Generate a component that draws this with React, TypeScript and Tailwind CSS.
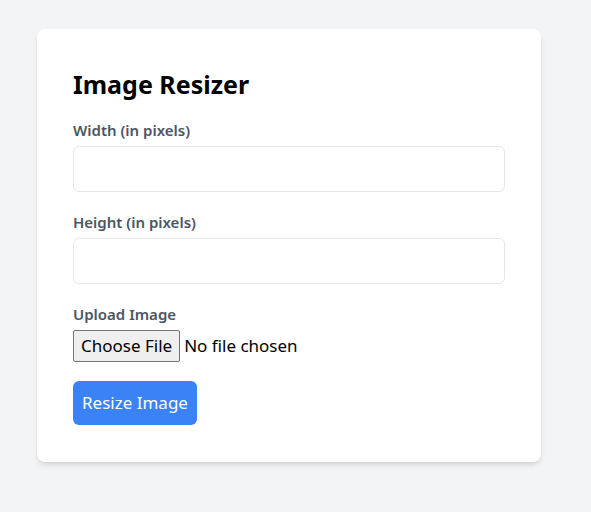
import React from "react";

export default function App() {
  return (
    <div className="min-h-screen bg-[#f3f4f6] pt-[29px] pl-[37px]" style={{ fontFamily: '"Noto Sans", "Open Sans", sans-serif' }}>
      <div className="w-[504px] bg-white rounded-lg shadow-md px-[36px] pt-[39px] pb-[37px]">
        <h1 className="text-[25px] leading-[32px] font-bold text-black mb-[20px]">Image Resizer</h1>
        <div className="mb-[20px]">
          <label className="block text-[15px] leading-[20px] font-semibold text-[#4b5563] mb-[6px]">Width (in pixels)</label>
          <input type="number" className="block w-full h-[46px] border border-gray-200 rounded-md px-3 outline-none" />
        </div>
        <div className="mb-[20px]">
          <label className="block text-[15px] leading-[20px] font-semibold text-[#4b5563] mb-[6px]">Height (in pixels)</label>
          <input type="number" className="block w-full h-[46px] border border-gray-200 rounded-md px-3 outline-none" />
        </div>
        <div className="mb-[19px]">
          <label className="block text-[15px] leading-[20px] font-semibold text-[#4b5563] mb-[6px]">Upload Image</label>
          <input type="file" className="block h-[32px] text-[17px] leading-[26px] text-black file:h-[32px] file:text-[17px] file:px-[7px] file:py-0 file:mr-[4px] file:border file:border-[#767676] file:rounded-[2px] file:bg-[#efefef] file:text-black" />
        </div>
        <button className="h-[44px] px-[9px] bg-[#3b82f6] text-white text-[17px] rounded-md">Resize Image</button>
      </div>
    </div>
  );
}
